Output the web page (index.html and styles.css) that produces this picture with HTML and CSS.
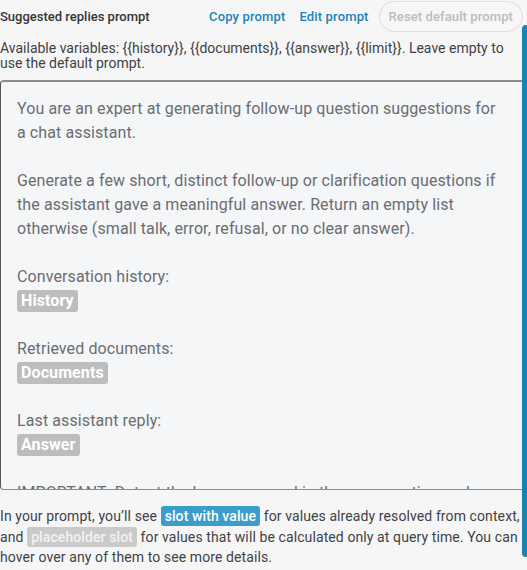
FILE: index.html
```html
<!DOCTYPE html>
<html lang="en">
<head>
<meta charset="utf-8">
<title>Suggested replies prompt</title>
<link rel="stylesheet" href="styles.css">
</head>
<body>
<div class="page">
  <div class="header">
    <div class="title">Suggested replies prompt</div>
    <div class="actions">
      <button class="link-btn">Copy prompt</button>
      <button class="link-btn">Edit prompt</button>
      <button class="pill-btn" disabled>Reset default prompt</button>
    </div>
  </div>
  <p class="desc">Available variables: {{history}}, {{documents}}, {{answer}}, {{limit}}. Leave empty to use the default prompt.</p>
  <div class="editor">
    <p>You are an expert at generating follow-up question suggestions for a chat assistant.</p>
    <p>Generate a few short, distinct follow-up or clarification questions if the assistant gave a meaningful answer. Return an empty list otherwise (small talk, error, refusal, or no clear answer).</p>
    <p>Conversation history:<br><span class="chip">History</span></p>
    <p>Retrieved documents:<br><span class="chip">Documents</span></p>
    <p>Last assistant reply:<br><span class="chip">Answer</span></p>
    <p>IMPORTANT: Detect the language used in the conversation and write the questions in that language.</p>
  </div>
  <p class="note">In your prompt, you’ll see <span class="slot slot-value">slot with value</span> for values already resolved from context, and <span class="slot slot-placeholder">placeholder slot</span> for values that will be calculated only at query time. You can hover over any of them to see more details.</p>
</div>
<div class="scroll-thumb"></div>
</body>
</html>
```
FILE: styles.css
```css
html, body {
  margin: 0;
  padding: 0;
  background: #f6f6f6;
  overflow: hidden;
  height: 570px;
}
body {
  font-family: Roboto, "Noto Sans", sans-serif;
  color: #3f4246;
  position: relative;
}
.page {
  width: 532px;
}
.header {
  display: flex;
  align-items: center;
  justify-content: space-between;
  height: 33px;
  width: 527px;
}
.title {
  font-size: 13px;
  font-weight: 500;
  color: #333538;
}
.actions {
  display: flex;
  align-items: center;
}
.link-btn {
  background: none;
  border: none;
  font-family: inherit;
  font-size: 13px;
  font-weight: 500;
  letter-spacing: 0.15px;
  color: #2283b8;
  padding: 0 7px;
  height: 30px;
  cursor: pointer;
}
.pill-btn {
  background: transparent;
  border: 1px solid #dedede;
  border-radius: 16px;
  font-family: inherit;
  font-size: 13px;
  font-weight: 500;
  letter-spacing: 0.1px;
  color: #bcbcbc;
  padding: 0 9px;
  height: 31px;
  margin-left: 3px;
  margin-right: 4px;
}
.desc {
  margin: 8px 0 0;
  width: 515px;
  font-size: 14px;
  line-height: 15px;
  color: #3f4246;
}
.editor {
  margin-top: 9px;
  height: 392px;
  overflow: hidden;
  border: 1px solid #8c8c8c;
  border-top: 2px solid #8c8c8c;
  border-left-color: #555;
  border-radius: 4px;
  background: #f5f6f7;
  padding: 15px 30px 0 16px;
  font-size: 16px;
  line-height: 24px;
  letter-spacing: 0.1px;
  color: #6a6d72;
}
.editor p {
  margin: 0 0 24px;
}
.chip {
  display: inline-block;
  background: #bdbdbd;
  color: #fff;
  font-weight: 700;
  border-radius: 3px;
  padding: 0 4px;
  line-height: 22px;
}
.note {
  margin: 16px 0 0;
  font-size: 14px;
  line-height: 20.5px;
  letter-spacing: 0.1px;
  color: #3f4246;
}
.slot {
  display: inline-block;
  border-radius: 3px;
  padding: 0 4px;
  line-height: 20px;
  font-weight: 500;
}
.slot-value {
  background: #3a9dcb;
  color: #fff;
}
.slot-placeholder {
  background: #cacaca;
  color: #f2f2f2;
}
.scroll-thumb {
  position: absolute;
  top: 25px;
  left: 522px;
  width: 8px;
  height: 532px;
  border-radius: 5px;
  background: #1b82b3;
}
```
